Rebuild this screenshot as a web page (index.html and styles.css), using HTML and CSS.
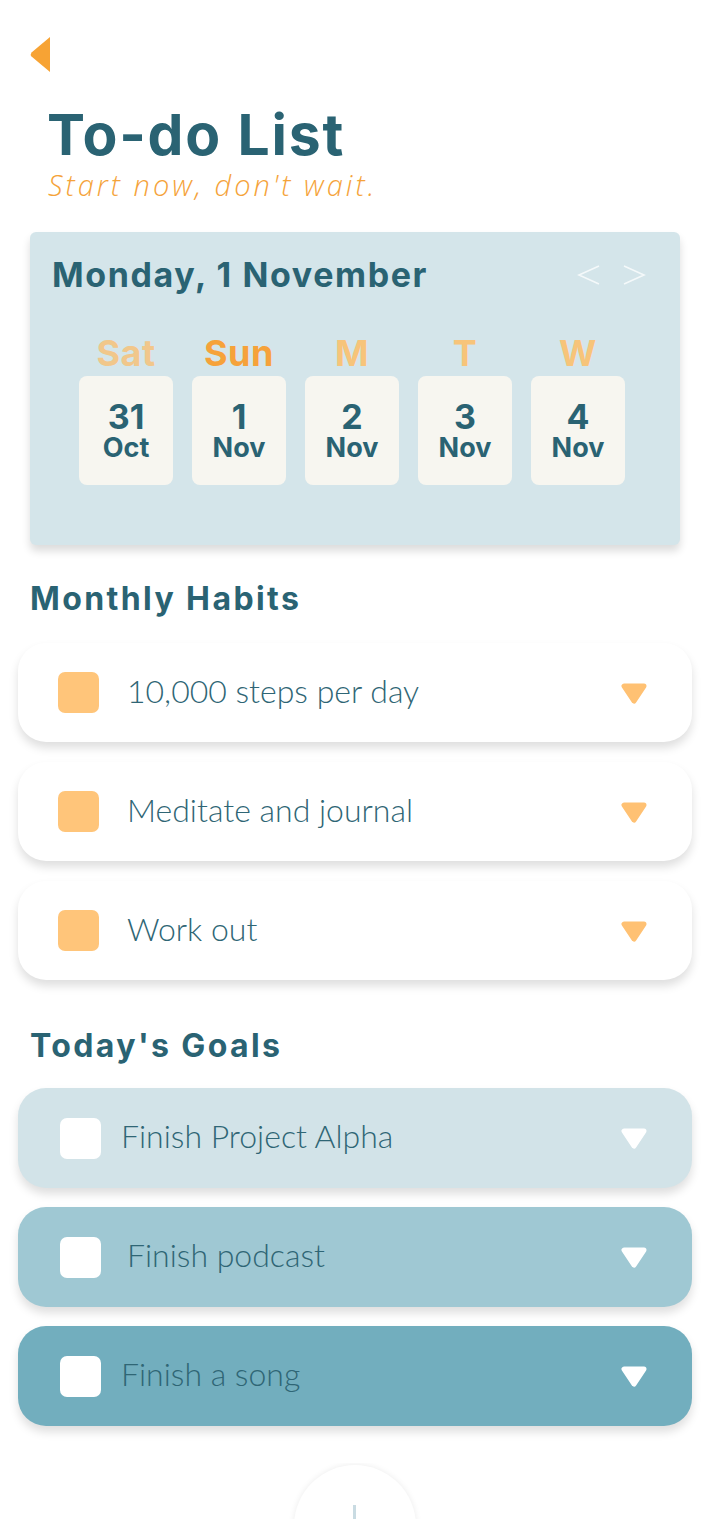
FILE: index.html
```html
<!DOCTYPE html>
<html lang="en">
<head>
<meta charset="utf-8">
<title>To-do List</title>
<link rel="stylesheet" href="styles.css">
</head>
<body>
<div class="app">
  <a class="back" href="#" aria-label="Back">
    <svg width="20" height="35" viewBox="0 0 20 35"><path d="M20 0 L20 35 L1.5 19.5 Q0 17.5 1.5 15.5 Z" fill="#F7A334"/></svg>
  </a>

  <header class="header">
    <h1 class="title">To-do List</h1>
    <p class="subtitle">Start now, don't wait.</p>
  </header>

  <section class="calendar">
    <div class="cal-head">
      <h2 class="cal-date">Monday, 1 November</h2>
      <div class="cal-nav">
        <svg width="24" height="22" viewBox="0 0 24 22"><polyline points="22,2 2,11 22,20" fill="none" stroke="#ffffff" stroke-opacity="0.75" stroke-width="1.6"/></svg>
        <svg width="24" height="22" viewBox="0 0 24 22"><polyline points="2,2 22,11 2,20" fill="none" stroke="#ffffff" stroke-opacity="0.75" stroke-width="1.6"/></svg>
      </div>
    </div>
    <div class="days">
      <div class="day">
        <span class="dname sat">Sat</span>
        <div class="dbox"><span class="dnum">31</span><span class="dmon">Oct</span></div>
      </div>
      <div class="day">
        <span class="dname sun">Sun</span>
        <div class="dbox"><span class="dnum">1</span><span class="dmon">Nov</span></div>
      </div>
      <div class="day">
        <span class="dname">M</span>
        <div class="dbox"><span class="dnum">2</span><span class="dmon">Nov</span></div>
      </div>
      <div class="day">
        <span class="dname">T</span>
        <div class="dbox"><span class="dnum">3</span><span class="dmon">Nov</span></div>
      </div>
      <div class="day">
        <span class="dname">W</span>
        <div class="dbox"><span class="dnum">4</span><span class="dmon">Nov</span></div>
      </div>
    </div>
  </section>

  <h2 class="section-title habits-title">Monthly Habits</h2>
  <ul class="list habits">
    <li class="item habit">
      <span class="check"></span>
      <span class="label">10,000 steps per day</span>
      <svg class="caret" width="28" height="22" viewBox="0 0 28 22"><path d="M4 4 L24 4 L14 19 Z" fill="#FFC173" stroke="#FFC173" stroke-width="5" stroke-linejoin="round"/></svg>
    </li>
    <li class="item habit">
      <span class="check"></span>
      <span class="label">Meditate and journal</span>
      <svg class="caret" width="28" height="22" viewBox="0 0 28 22"><path d="M4 4 L24 4 L14 19 Z" fill="#FFC173" stroke="#FFC173" stroke-width="5" stroke-linejoin="round"/></svg>
    </li>
    <li class="item habit">
      <span class="check"></span>
      <span class="label">Work out</span>
      <svg class="caret" width="28" height="22" viewBox="0 0 28 22"><path d="M4 4 L24 4 L14 19 Z" fill="#FFC173" stroke="#FFC173" stroke-width="5" stroke-linejoin="round"/></svg>
    </li>
  </ul>

  <h2 class="section-title goals-title">Today's Goals</h2>
  <ul class="list goals">
    <li class="item goal goal-1">
      <span class="check"></span>
      <span class="label">Finish Project Alpha</span>
      <svg class="caret" width="28" height="22" viewBox="0 0 28 22"><path d="M4 4 L24 4 L14 19 Z" fill="#ffffff" stroke="#ffffff" stroke-width="5" stroke-linejoin="round"/></svg>
    </li>
    <li class="item goal goal-2">
      <span class="check"></span>
      <span class="label">Finish podcast</span>
      <svg class="caret" width="28" height="22" viewBox="0 0 28 22"><path d="M4 4 L24 4 L14 19 Z" fill="#ffffff" stroke="#ffffff" stroke-width="5" stroke-linejoin="round"/></svg>
    </li>
    <li class="item goal goal-3">
      <span class="check"></span>
      <span class="label">Finish a song</span>
      <svg class="caret" width="28" height="22" viewBox="0 0 28 22"><path d="M4 4 L24 4 L14 19 Z" fill="#ffffff" stroke="#ffffff" stroke-width="5" stroke-linejoin="round"/></svg>
    </li>
  </ul>

  <div class="fab-wrap">
    <button class="fab" aria-label="Add">
      <span class="plus-v"></span>
      <span class="plus-h"></span>
    </button>
  </div>
</div>
</body>
</html>
```

FILE: styles.css
```css
* { box-sizing: border-box; }

html, body {
  margin: 0;
  padding: 0;
  background: #ffffff;
}

body {
  font-family: "Inter", "Noto Sans", sans-serif;
  color: #2b6373;
}

.app {
  padding: 37px 18px 0;
  display: flex;
  flex-direction: column;
}

.back {
  display: block;
  width: 20px;
  height: 35px;
  margin-left: 12px;
}
.back svg { display: block; }

.header {
  margin: 32px 0 0 29px;
}

.title {
  margin: 0;
  font-family: "Inter", sans-serif;
  font-weight: 700;
  font-size: 57px;
  line-height: 62px;
  letter-spacing: 1.8px;
  color: #2a6373;
}

.subtitle {
  margin: 2px 0 0 1px;
  font-family: "Open Sans", "Lato", sans-serif;
  font-weight: 300;
  font-style: italic;
  font-size: 29px;
  line-height: 34px;
  letter-spacing: 3px;
  color: #f5a33a;
}

.calendar {
  margin: 30px 12px 0;
  height: 313px;
  background: #d4e5ea;
  border-radius: 6px;
  box-shadow: 0 6px 8px rgba(0, 0, 0, 0.14);
  padding: 22px 34px 0 22px;
}

.cal-head {
  display: flex;
  justify-content: space-between;
  align-items: center;
}

.cal-date {
  margin: 0;
  font-family: "Inter", sans-serif;
  font-weight: 700;
  font-size: 34px;
  line-height: 42px;
  letter-spacing: 1.6px;
  color: #2a6373;
}

.cal-nav {
  display: flex;
  gap: 21px;
}
.cal-nav svg { display: block; }

.days {
  display: flex;
  gap: 19px;
  margin: 38px 0 0 27px;
}

.day {
  display: flex;
  flex-direction: column;
  align-items: center;
  width: 94px;
}

.dname {
  font-family: "Inter", sans-serif;
  font-weight: 700;
  font-size: 36px;
  line-height: 38px;
  letter-spacing: 0.5px;
  color: #f7c47a;
}
.dname.sat { color: #f1c78b; }
.dname.sun { color: #f6a23a; }

.dbox {
  margin-top: 4px;
  width: 94px;
  height: 109px;
  background: #f7f6f0;
  border-radius: 8px;
  display: flex;
  flex-direction: column;
  align-items: center;
  justify-content: center;
}

.dnum {
  font-family: "Inter", sans-serif;
  font-weight: 700;
  font-size: 34px;
  line-height: 34px;
  color: #2a6373;
}

.dmon {
  font-family: "Inter", sans-serif;
  font-weight: 700;
  font-size: 27px;
  line-height: 28px;
  color: #2a6373;
}

.section-title {
  margin: 0 0 0 12px;
  font-family: "Inter", sans-serif;
  font-weight: 700;
  font-size: 32px;
  line-height: 40px;
  letter-spacing: 2.4px;
  color: #2a6373;
}

.habits-title { margin-top: 34px; }
.goals-title { margin-top: 46px; }

.list {
  list-style: none;
  margin: 0;
  padding: 0;
  display: flex;
  flex-direction: column;
}

.habits { margin-top: 24px; gap: 20px; }
.goals { margin-top: 22px; gap: 19px; }

.item {
  height: 99px;
  border-radius: 28px;
  display: flex;
  align-items: center;
  padding: 0 44px 0 40px;
  box-shadow: 0 6px 10px rgba(0, 0, 0, 0.13);
}

.habit { background: #ffffff; }
.goal { height: 100px; padding-left: 42px; }
.goal-1 { background: #d2e3e8; }
.goal-2 { background: #9fc8d3; }
.goal-3 { background: #72aebe; }

.check {
  width: 41px;
  height: 41px;
  border-radius: 7px;
  flex: none;
  background: #ffc57a;
}
.goal .check { background: #ffffff; }

.label {
  flex: 1;
  margin-left: 28px;
  font-family: "Lato", sans-serif;
  font-weight: 300;
  font-size: 32px;
  line-height: 40px;
  padding-bottom: 4px;
  color: #2f6675;
}
.goal .label { margin-left: 20px; }
.goal-2 .label { margin-left: 26px; }

.caret { display: block; flex: none; }

.fab-wrap {
  margin-top: 37px;
  height: 60px;
  overflow: hidden;
  display: flex;
  justify-content: center;
}

.fab {
  position: relative;
  flex: none;
  width: 122px;
  height: 122px;
  margin-top: 2px;
  border-radius: 50%;
  border: none;
  background: #ffffff;
  box-shadow: 0 0 6px rgba(0, 0, 0, 0.08);
  padding: 0;
}

.plus-v {
  position: absolute;
  left: 59px;
  top: 40px;
  width: 3px;
  height: 42px;
  background: #c9dbe2;
}

.plus-h {
  position: absolute;
  left: 40px;
  top: 59px;
  width: 42px;
  height: 3px;
  background: #c9dbe2;
}
```
